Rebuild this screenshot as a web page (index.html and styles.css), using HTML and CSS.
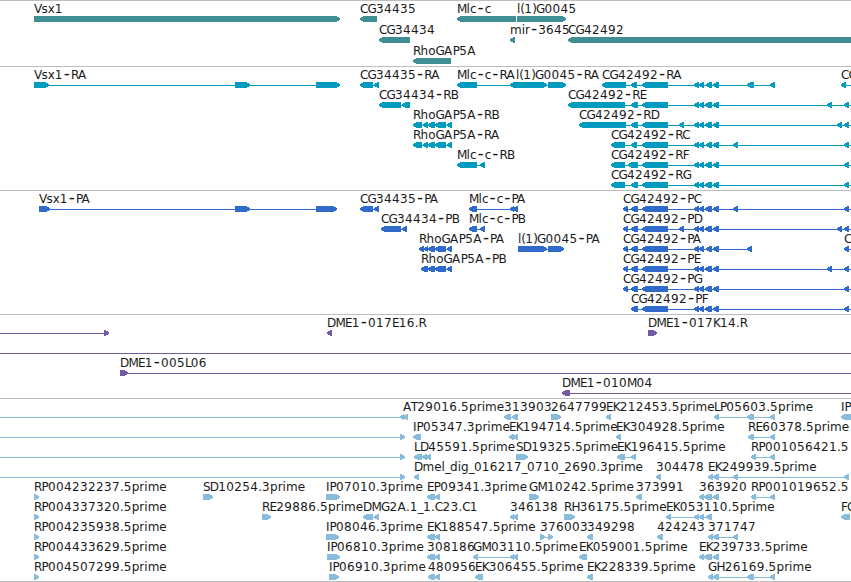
FILE: index.html
```html
<!DOCTYPE html>
<html lang="en">
<head>
	<meta charset="UTF-8">
	<title>Genome tracks</title>
	<link rel="stylesheet" href="styles.css">
</head>
<body>
	<div id="browser">
		<svg class="track genes" width="851" height="66" data-track="genes"></svg>
		<svg class="track transcripts" width="851" height="124" data-track="transcripts"></svg>
		<svg class="track proteins" width="851" height="124" data-track="proteins"></svg>
		<svg class="track bacs" width="851" height="84" data-track="bacs"></svg>
		<svg class="track ests" width="851" height="183" data-track="ests"></svg>
	</div>
	<script src="tracks.js"></script>
</body>
</html>
```
FILE: styles.css
```css
body{
	margin:0;
	background:#fff;
}
#browser{
	width:851px;
	height:581px;
	overflow:hidden;
	border-bottom:1px solid #bebebe;
}
.track{
	display:block;
	box-sizing:border-box;
	border-top:1px solid #bebebe;
	overflow:hidden;
}
.track text{
	font:12px "DejaVu Sans", sans-serif;
	fill:#1a1a1a;
	white-space:pre;
}
.track .dash{
	font-size:17px;
}
.track rect,
.track polygon{
	shape-rendering:crispEdges;
}
.genes{
	color:#3f8e93;
}
.transcripts{
	color:#009bbf;
}
.proteins{
	color:#306bcb;
}
.bacs{
	color:#7358a5;
}
.ests{
	color:#88bbdc;
}
```
FILE: tracks.js
```js
// each feature: [label, strand, "start-end" blocks, line start, line end]
var tracks = {
	genes: [
		[
			['Vsx1', '+', '34-340'],
			['CG34435', '-', '360-377'],
			['Mlc-c', '-', '457-516'],
			['l(1)G0045', '+', '517-566']
		],
		[
			['CG34434', '-', '379-410'],
			['mir-3645', '-', '510-515'],
			['CG42492', '-', '568-860']
		],
		[
			['RhoGAP5A', '-', '413-451']
		]
	],
	transcripts: [
		[
			['Vsx1-RA', '+', '34-49 235-250 316-340'],
			['CG34435-RA', '-', '360-373 374-379'],
			['Mlc-c-RA', '-', '457-477 510-517'],
			['l(1)G0045-RA', '+', '516-547 548-566'],
			['CG42492-RA', '-', '602-626 631-637 642-668 694-699 699-704 706-712 713-719 747-754 770-775'],
			['CG', '-', '841-846', 841, 851]
		],
		[
			['CG34434-RB', '-', '379-401 402-410'],
			['CG42492-RE', '-', '568-625 631-638 642-668 694-699 699-704 705-712 713-719 827-832 844-849', 568, 851]
		],
		[
			['RhoGAP5A-RB', '-', '413-422 423-428 428-435 435-446 447-452'],
			['CG42492-RD', '-', '579-626 631-638 642-668 679-684 694-699 699-704 705-712 713-719 837-842 844-849', 579, 851]
		],
		[
			['RhoGAP5A-RA', '-', '413-422 423-428 428-435 435-446 447-452'],
			['CG42492-RC', '-', '611-625 631-637 642-668 694-699 699-704 706-712 713-719 733-738 844-849', 611, 851]
		],
		[
			['Mlc-c-RB', '-', '457-477 480-485'],
			['CG42492-RF', '-', '611-625 628-638 642-668 694-699 699-704 705-712 713-719 844-849', 611, 851]
		],
		[
			['CG42492-RG', '-', '611-625 631-638 642-668 694-699 699-704 705-712 713-719 844-849', 611, 851]
		]
	],
	proteins: [
		[
			['Vsx1-PA', '+', '39-50 235-250 316-337'],
			['CG34435-PA', '-', '360-373 374-379'],
			['Mlc-c-PA', '-', '469-477 510-514 513-518'],
			['CG42492-PC', '-', '623-628 631-638 642-668 694-699 699-704 705-712 713-719 733-738 844-849', 623, 851]
		],
		[
			['CG34434-PB', '-', '381-401 402-407'],
			['Mlc-c-PB', '-', '469-477 480-485'],
			['CG42492-PD', '-', '623-628 631-638 642-668 679-684 694-699 699-704 705-712 713-719 837-842 844-849', 623, 851]
		],
		[
			['RhoGAP5A-PA', '-', '419-424 424-428 428-435 435-446 447-452'],
			['l(1)G0045-PA', '+', '518-547 548-564'],
			['CG42492-PA', '-', '623-628 631-638 642-668 694-699 699-704 706-712 713-719 747-752'],
			['CG', '-', '844-849', 844, 851]
		],
		[
			['RhoGAP5A-PB', '-', '421-428 428-435 435-446 447-452'],
			['CG42492-PE', '-', '623-628 631-638 642-668 694-699 699-704 705-712 713-719 827-832 844-849', 623, 851]
		],
		[
			['CG42492-PG', '-', '623-628 631-638 642-668 694-699 699-704 705-712 713-719 844-849', 623, 851]
		],
		[
			['CG42492-PF', '-', '631-638 642-668 694-699 699-704 705-712 713-719 844-849', 631, 851]
		]
	],
	bacs: [
		[
			['', '+', '104-109', 0, 109],
			['DME1-017E16.R', '-', '327-332'],
			['DME1-017K14.R', '+', '648-657']
		],
		[
			['', '+', '', 0, 851]
		],
		[
			['DME1-005L06', '+', '120-128', 120, 851]
		],
		[
			['DME1-010M04', '-', '562-570', 562, 851]
		]
	],
	ests: [
		[
			['', '-', '400-404 403-408', 0, 408],
			['AT29016.5prime', '-', '', 403, 403],
			['313903', '-', '504-511 512-518'],
			['2647799', '+', '551-561'],
			['EK212453.5prime', '-', '606-611'],
			['LP05603.5prime', '-', '714-719 747-754 770-775'],
			['IP', '-', '841-855']
		],
		[
			['', '+', '400-405', 0, 405],
			['IP05347.3prime', '-', '413-421'],
			['EK194714.5prime', '-', '509-514 513-518'],
			['EK304928.5prime', '-', '616-621'],
			['RE60378.5prime', '-', '748-754 770-775']
		],
		[
			['', '+', '400-405', 0, 405],
			['LD45591.5prime', '-', '414-422 422-427 426-431'],
			['SD19325.5prime', '+', '516-528'],
			['EK196415.5prime', '-', '617-625 631-636'],
			['RP001056421.5', '-', '751-756 770-775']
		],
		[
			['', '+', '400-405', 0, 405],
			['Dmel_dig_016217_0710_2690.3prime', '-', '414-419'],
			['304478', '-', '656-661'],
			['EK249939.5prime', '-', '708-713 713-719 733-738 844-849']
		],
		[
			['RP004232237.5prime', '+', '34-39'],
			['SD10254.3prime', '+', '203-213'],
			['IP07010.3prime', '+', '326-340'],
			['EP09341.3prime', '-', '427-435 435-440'],
			['GM10242.5prime', '+', '529-539'],
			['373991', '-', '636-642'],
			['363920', '-', '699-704 704-712 713-719'],
			['RP001019652.5', '-', '751-756 770-775']
		],
		[
			['RP004337320.5prime', '+', '34-39'],
			['RE29886.5prime', '+', '262-271'],
			['DMG2A.1_1.C23.C1', '-', '363-373 374-379'],
			['346138', '-', '510-514 513-518'],
			['RH36175.5prime', '+', '564-575'],
			['EK053110.5prime', '-', '666-671 694-699 699-704 706-712'],
			['FC', '-', '841-850']
		],
		[
			['RP004235938.5prime', '+', '34-39'],
			['IP08046.3prime', '+', '326-339'],
			['EK188547.5prime', '-', '427-435 435-440'],
			['376003', '+', '540-545 548-553'],
			['349298', '-', '587-593'],
			['424243', '-', '657-663'],
			['371747', '-', '708-713 713-719 733-738']
		],
		[
			['RP004433629.5prime', '+', '34-39'],
			['IP06810.3prime', '+', '327-340'],
			['308186', '-', '427-435 435-440'],
			['GM03110.5prime', '-', '473-478 510-514 513-518'],
			['EK059001.5prime', '-', '579-587'],
			['EK239733.5prime', '-', '699-704 704-712 713-719']
		],
		[
			['RP004507299.5prime', '+', '34-39'],
			['IP06910.3prime', '+', '329-339'],
			['480956', '-', '428-435 435-440'],
			['EK306455.5prime', '-', '475-483'],
			['EK228339.5prime', '-', '587-593'],
			['GH26169.5prime', '-', '708-713 713-719 747-754 770-775']
		]
	]
};

function add(parent, name, attrs) {
	var el = document.createElementNS('http://www.w3.org/2000/svg', name);
	for (var key in attrs) {
		el.setAttribute(key, attrs[key]);
	}
	parent.appendChild(el);
	return el;
}

// block with a 4px arrow head on the strand side
function drawBlock(svg, a, b, y, strand) {
	var head = Math.min(4, b - a);
	var points;
	if (strand == '-') {
		points = [a, y + 2, a + head, y, b, y, b, y + 6, a + head, y + 6, a, y + 4];
	} else {
		points = [b, y + 2, b - head, y, a, y, a, y + 6, b - head, y + 6, b, y + 4];
	}
	add(svg, 'polygon', {points: points.join(' '), fill: 'currentColor'});
}

// extra space after a character: wide digits and dashes, tight capitals
function spaceAfter(ch) {
	if (ch == '-') return 1;
	if (ch == 'A') return 0.5;
	if (ch == 'I') return 0;
	if (/[0-9]/.test(ch)) return 0.35;
	if (/[A-Z_()]/.test(ch)) return -0.8;
	return 0;
}

function drawLabel(svg, label, x, y) {
	var text = add(svg, 'text', {x: x, y: y});
	var prev = '';
	label.split(/(-)/).forEach(function(part){
		var dx = [];
		for (var i = 0; i < part.length; i ++) {
			dx.push((spaceAfter(prev) + (part[i] == '-' ? 1 : 0)).toFixed(2));
			prev = part[i];
		}
		var span = add(text, 'tspan', {dx: dx.join(' ')});
		span.textContent = part;
		if (part == '-') {
			span.setAttribute('class', 'dash');
		}
	});
}

function drawFeature(svg, feature, top) {
	var blocks = feature[2] ? feature[2].split(' ').map(function(s){
		return s.split('-').map(Number);
	}) : [];
	var start = feature[3] !== undefined ? feature[3] : blocks[0][0];
	var end = feature[4] !== undefined ? feature[4] : blocks[blocks.length - 1][1];

	if (blocks.length != 1 || feature[3] !== undefined) {
		add(svg, 'rect', {x: start, y: top + 18, width: end - start, height: 1, fill: 'currentColor'});
	}
	for (var i = 0; i < blocks.length; i ++) {
		drawBlock(svg, blocks[i][0], blocks[i][1], top + 15, feature[1]);
	}
	if (feature[0]) {
		drawLabel(svg, feature[0], start, top + 12);
	}
}

var list = document.querySelectorAll('.track');
for (var n = 0; n < list.length; n ++) {
	var name = list[n].getAttribute('data-track');
	var pitch = name == 'genes' ? 21 : 20;
	tracks[name].forEach(function(row, i){
		row.forEach(function(feature){
			drawFeature(list[n], feature, i * pitch);
		});
	});
}
```
